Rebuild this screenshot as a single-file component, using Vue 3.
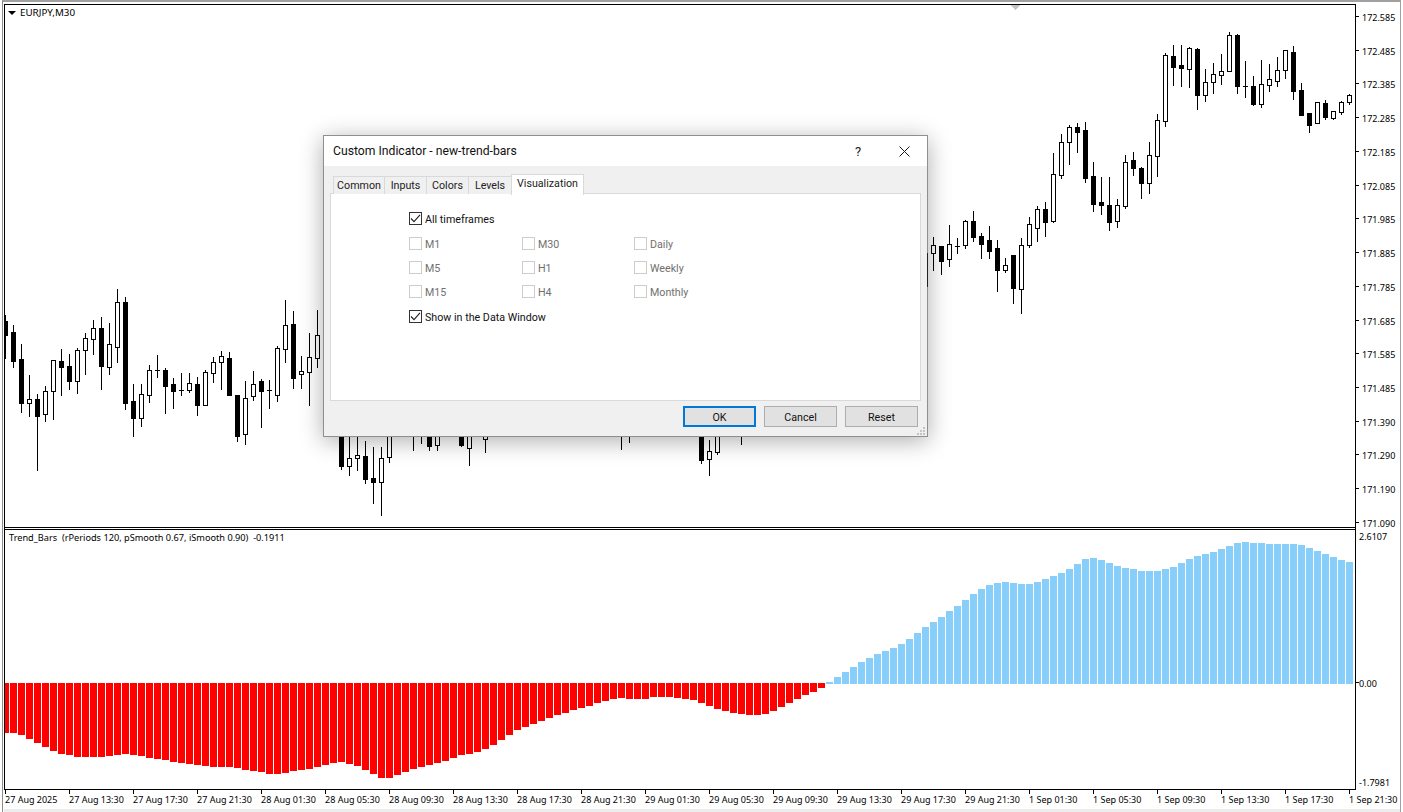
<template>
  <div class="terminal">
    <div class="frame">
      <section class="pane price-pane">
        <div class="plot-box">
          <svg class="plot" width="1350" height="522" viewBox="5 5 1350 522" shape-rendering="crispEdges">
            <polygon points="1010,5 1021,5 1015.5,10" fill="#c4c4c4" />
            <g v-for="c in candles" :key="c[0]">
              <rect :x="c[0]" :y="c[1]" width="1" :height="c[4] - c[1] + 1" fill="#000" />
              <rect :x="c[0] - 2" :y="c[2]" width="5" :height="c[3] - c[2] + 1" fill="#000" />
              <rect
                v-if="!c[5] && c[3] - c[2] > 1"
                :x="c[0] - 1"
                :y="c[2] + 1"
                width="3"
                :height="c[3] - c[2] - 1"
                fill="#fff"
              />
            </g>
          </svg>
          <div class="legend">
            <span class="legend-arrow"></span>
            <span>EURJPY,M30</span>
          </div>
        </div>
        <div class="axis">
          <svg width="44" height="523" viewBox="1356 5 44 523">
            <g v-for="p in prices" :key="p.label">
              <rect x="1356" :y="p.y" width="3" height="1" fill="#000" shape-rendering="crispEdges" />
              <text x="1362" :y="p.y + 4">{{ p.label }}</text>
            </g>
          </svg>
        </div>
      </section>

      <section class="pane indicator-pane">
        <div class="plot-box">
          <svg class="plot" width="1350" height="259" viewBox="5 530 1350 259" shape-rendering="crispEdges">
            <rect
              v-for="(y, i) in redBars"
              :key="'r' + i"
              :x="2 + i * 8"
              y="683"
              width="7"
              :height="y - 683"
              fill="#ff0000"
            />
            <rect
              v-for="(y, i) in blueBars"
              :key="'b' + i"
              :x="826 + i * 8"
              :y="y"
              width="7"
              :height="684 - y"
              fill="#87cefa"
            />
          </svg>
          <div class="indicator-label">Trend_Bars&nbsp; (rPeriods 120, pSmooth 0.67, iSmooth 0.90)&nbsp; -0.1911</div>
        </div>
        <div class="axis">
          <svg width="44" height="260" viewBox="1356 530 44 260">
            <text x="1359" y="540">2.6107</text>
            <rect x="1356" y="683" width="3" height="1" fill="#000" shape-rendering="crispEdges" />
            <text x="1359" y="687">0.00</text>
            <text x="1359" y="786">-1.7981</text>
          </svg>
        </div>
      </section>

      <div class="time-axis">
        <div v-for="t in times" :key="t" class="time-tick">{{ t }}</div>
      </div>
    </div>

    <div class="dialog">
      <div class="title-bar">
        <span class="title-text">Custom Indicator - new-trend-bars</span>
        <span class="title-btn help">?</span>
        <span class="title-btn">
          <svg width="11" height="11" viewBox="0 0 11 11">
            <path d="M.5.5l10 10M10.5.5l-10 10" stroke="#1a1a1a" stroke-width="1" fill="none" />
          </svg>
        </span>
      </div>

      <div class="dialog-body">
        <div class="tabs">
          <div v-for="tab in tabs" :key="tab" class="tab" :class="{ active: tab === 'Visualization' }">{{ tab }}</div>
        </div>
        <div class="tab-page">
          <label class="check-row first">
            <span class="box checked">
              <svg width="11" height="11" viewBox="0 0 11 11">
                <path d="M1 5.5l3 3.2L10 1.8" stroke="#222" stroke-width="1.1" fill="none" />
              </svg>
            </span>
            All timeframes
          </label>
          <div class="period-grid">
            <label v-for="p in periods" :key="p" class="check-row disabled">
              <span class="box"></span>
              {{ p }}
            </label>
          </div>
          <label class="check-row">
            <span class="box checked">
              <svg width="11" height="11" viewBox="0 0 11 11">
                <path d="M1 5.5l3 3.2L10 1.8" stroke="#222" stroke-width="1.1" fill="none" />
              </svg>
            </span>
            Show in the Data Window
          </label>
        </div>
        <div class="buttons">
          <button class="btn default">OK</button>
          <button class="btn">Cancel</button>
          <button class="btn">Reset</button>
        </div>
      </div>

      <svg class="grip" width="9" height="9" viewBox="0 0 9 9" shape-rendering="crispEdges">
        <path d="M6 0h2v2H6zM3 3h2v2H3zM6 3h2v2H6zM0 6h2v2H0zM3 6h2v2H3zM6 6h2v2H6z" fill="#c4c4c4" />
      </svg>
    </div>
  </div>
</template>

<script setup>
const tabs = ['Common', 'Inputs', 'Colors', 'Levels', 'Visualization']

// filled column by column
const periods = ['M1', 'M5', 'M15', 'M30', 'H1', 'H4', 'Daily', 'Weekly', 'Monthly']

const priceLabels = [
  '172.585', '172.485', '172.385', '172.285', '172.185', '172.085', '171.985', '171.885',
  '171.785', '171.685', '171.585', '171.485', '171.390', '171.290', '171.190', '171.090',
]
const prices = priceLabels.map((label, i) => ({ label, y: Math.round(17 + i * 33.73) }))

const hours = ['01:30', '05:30', '09:30', '13:30', '17:30', '21:30']
const times = [
  '27 Aug 2025',
  '27 Aug 13:30',
  '27 Aug 17:30',
  '27 Aug 21:30',
  ...hours.map((h) => `28 Aug ${h}`),
  ...hours.map((h) => `29 Aug ${h}`),
  ...hours.map((h) => `1 Sep ${h}`),
]

// x, high, body top, body bottom, low, black body
const candles = [
  [5, 315, 321, 335, 358, 1], [13, 325, 332, 361, 367, 1], [21, 344, 359, 403, 412, 1],
  [29, 375, 399, 403, 416, 0], [37, 394, 399, 416, 470, 1], [45, 386, 391, 414, 421, 0],
  [53, 360, 360, 391, 419, 0], [61, 349, 361, 367, 395, 1], [69, 354, 366, 381, 389, 1],
  [77, 348, 350, 381, 393, 0], [85, 333, 338, 350, 374, 0], [93, 320, 328, 339, 354, 0],
  [101, 317, 328, 366, 389, 1], [109, 323, 344, 367, 374, 0], [117, 289, 302, 347, 362, 0],
  [125, 297, 302, 403, 409, 1], [133, 384, 401, 418, 436, 1], [141, 384, 394, 418, 426, 0],
  [149, 365, 370, 395, 402, 0], [157, 355, 370, 370, 377, 1], [165, 368, 370, 386, 413, 1],
  [173, 378, 384, 391, 408, 1], [181, 373, 390, 390, 395, 1], [189, 373, 383, 390, 392, 0],
  [197, 377, 384, 405, 415, 1], [205, 370, 372, 405, 405, 0], [213, 357, 362, 373, 382, 0],
  [221, 351, 356, 362, 389, 0], [229, 352, 358, 395, 395, 1], [237, 395, 395, 436, 441, 1],
  [245, 381, 398, 434, 444, 0], [253, 371, 384, 396, 400, 0], [261, 379, 381, 391, 427, 1],
  [269, 380, 390, 390, 408, 1], [277, 346, 348, 395, 401, 0], [285, 300, 325, 349, 362, 0],
  [293, 311, 324, 378, 388, 1], [301, 356, 371, 374, 388, 0], [309, 333, 357, 372, 405, 0],
  [317, 310, 335, 358, 367, 0],
  // below the dialog
  [341, 420, 425, 466, 469, 1], [349, 420, 458, 466, 475, 0], [357, 420, 455, 458, 470, 0],
  [365, 441, 456, 479, 483, 1], [373, 447, 478, 482, 503, 1], [381, 447, 458, 482, 515, 0],
  [389, 420, 425, 457, 462, 0], [413, 420, 422, 424, 450, 0], [421, 420, 422, 424, 443, 0],
  [429, 420, 425, 446, 450, 1], [437, 420, 425, 445, 450, 0], [461, 420, 425, 445, 446, 1],
  [469, 420, 425, 448, 465, 0], [485, 420, 425, 439, 452, 0], [621, 420, 422, 424, 449, 0],
  [629, 420, 422, 424, 442, 0], [701, 420, 425, 460, 463, 1], [709, 440, 451, 459, 475, 0],
  [717, 420, 425, 452, 454, 0], [741, 420, 422, 424, 444, 0],
  // right of the dialog
  [933, 237, 245, 253, 270, 0], [941, 246, 246, 261, 274, 1], [949, 225, 244, 259, 266, 0],
  [957, 238, 246, 246, 253, 1], [965, 220, 221, 245, 248, 0], [973, 211, 221, 237, 241, 1],
  [981, 233, 236, 244, 258, 1], [989, 226, 240, 251, 258, 1], [997, 240, 248, 270, 291, 1],
  [1005, 258, 265, 270, 272, 0], [1013, 255, 255, 288, 303, 1], [1021, 238, 245, 289, 313, 0],
  [1029, 217, 224, 245, 247, 0], [1037, 206, 209, 228, 241, 0], [1045, 202, 209, 222, 236, 1],
  [1053, 153, 174, 221, 222, 0], [1061, 134, 142, 175, 178, 0], [1069, 125, 127, 142, 164, 0],
  [1077, 123, 127, 132, 152, 1], [1085, 122, 130, 178, 182, 1], [1093, 162, 176, 204, 211, 1],
  [1101, 177, 202, 205, 214, 1], [1109, 177, 205, 222, 230, 1], [1117, 199, 205, 221, 227, 0],
  [1125, 155, 162, 206, 208, 0], [1133, 152, 160, 168, 175, 1], [1141, 167, 168, 183, 198, 1],
  [1149, 142, 155, 183, 193, 0], [1157, 114, 120, 156, 176, 0], [1165, 53, 55, 121, 126, 0],
  [1173, 45, 56, 67, 85, 1], [1181, 45, 65, 68, 86, 1], [1189, 47, 48, 69, 87, 0],
  [1197, 48, 49, 95, 109, 1], [1205, 69, 82, 95, 101, 0], [1213, 63, 74, 82, 93, 0],
  [1221, 54, 71, 75, 84, 0], [1229, 32, 35, 71, 71, 0], [1237, 34, 35, 86, 93, 1],
  [1245, 61, 86, 86, 97, 1], [1253, 76, 86, 104, 105, 1], [1261, 60, 84, 104, 107, 0],
  [1269, 64, 79, 85, 91, 0], [1277, 57, 70, 81, 86, 0], [1285, 50, 50, 70, 78, 0],
  [1293, 46, 52, 91, 99, 1], [1301, 83, 90, 115, 115, 1], [1309, 113, 113, 125, 132, 1],
  [1317, 102, 102, 123, 123, 0], [1325, 100, 103, 117, 119, 1], [1333, 111, 111, 118, 119, 0],
  [1341, 101, 102, 112, 114, 0], [1349, 94, 95, 102, 104, 0],
]

// bottom edge of each red bar, from x = 5 every 8px
const redBars = [
  733, 733, 735, 739, 743, 747, 751, 754, 755, 757, 757, 757, 757, 756, 755, 754, 755, 756, 758,
  759, 760, 762, 763, 764, 765, 766, 767, 767, 767, 768, 770, 771, 772, 774, 774, 773, 771, 770,
  769, 767, 765, 763, 762, 764, 766, 770, 774, 778, 778, 775, 772, 769, 767, 765, 763, 761, 758,
  755, 754, 752, 749, 745, 740, 735, 730, 727, 724, 721, 718, 715, 713, 710, 708, 706, 703, 701,
  699, 698, 699, 699, 699, 697, 697, 697, 698, 699, 700, 703, 706, 709, 711, 713, 714, 715, 715,
  714, 711, 707, 703, 699, 695, 692, 688,
]

// top edge of each blue bar, from x = 829 every 8px
const blueBars = [
  682, 677, 672, 667, 662, 658, 654, 651, 648, 644, 639, 633, 627, 622, 617, 611, 606, 600, 594,
  589, 585, 583, 582, 583, 584, 584, 582, 579, 576, 573, 569, 564, 559, 558, 560, 563, 566, 568,
  569, 571, 571, 571, 569, 567, 563, 559, 556, 554, 552, 549, 546, 543, 542, 543, 543, 544, 544,
  544, 544, 545, 548, 551, 554, 557, 560, 562,
]
</script>

<style>
html,
body {
  margin: 0;
  overflow: hidden;
  background: #fff;
}
</style>

<style scoped>
.terminal {
  position: relative;
  display: flex;
  width: 1403px;
  height: 812px;
  padding: 0 2px 0 2px;
  box-sizing: border-box;
  overflow: hidden;
  background: #fff;
  font-family: "Noto Sans", sans-serif;
  color: #000;
}

.frame {
  flex: 1;
  min-width: 0;
  display: flex;
  flex-direction: column;
  padding: 2px 0 0 1px;
  border-top: 2px solid #a0a0a0;
  border-left: 1px solid #8c8c8c;
  border-right: 1px solid #a0a0a0;
  overflow: hidden;
}

.pane {
  display: flex;
  flex: none;
  border-left: 1px solid #000;
}

.plot-box {
  position: relative;
  width: 1350px;
  border-top: 1px solid #000;
  border-bottom: 1px solid #000;
}

.price-pane .plot-box {
  margin-bottom: 1px;
}

.plot {
  display: block;
}

.axis {
  border-left: 1px solid #000;
  width: 44px;
}

.axis svg {
  display: block;
  overflow: visible;
}

.axis text {
  font-size: 9px;
  fill: #000;
  transform: translateY(1px);
}

.legend {
  position: absolute;
  left: 3px;
  top: 1px;
  display: flex;
  align-items: center;
  gap: 4px;
  font-size: 9.8px;
  line-height: 13px;
}

.legend-arrow {
  width: 0;
  height: 0;
  border-left: 4px solid transparent;
  border-right: 4px solid transparent;
  border-top: 4px solid #000;
}

.indicator-label {
  position: absolute;
  left: 4px;
  top: 1px;
  font-size: 9.2px;
  line-height: 14px;
  white-space: nowrap;
}

.time-axis {
  display: flex;
  flex: 1;
  padding-left: 1px;
  overflow: hidden;
  background: #fff;
  box-shadow: inset 0 -3px 0 #ececec;
}

.time-tick {
  flex: 0 0 64px;
  position: relative;
  padding-top: 3px;
  font-size: 9px;
  line-height: 13px;
  white-space: nowrap;
}

.time-tick::before {
  content: "";
  position: absolute;
  left: 0;
  top: 0;
  width: 1px;
  height: 4px;
  background: #000;
}

.dialog {
  position: absolute;
  left: 323px;
  top: 135px;
  width: 605px;
  height: 302px;
  box-sizing: border-box;
  display: flex;
  flex-direction: column;
  background: #f0f0f0;
  border: 1px solid #8f8f8f;
  box-shadow: 0 4px 22px rgba(0, 0, 0, 0.32);
  font-family: Roboto, sans-serif;
  font-size: 10.7px;
}

/* wick of the candle behind the dialog, seen through its edge */
.dialog::after {
  content: "";
  position: absolute;
  right: -1px;
  top: 117px;
  width: 1px;
  height: 34px;
  background: #222;
}

.title-bar {
  display: flex;
  align-items: center;
  flex: none;
  height: 30px;
  background: #fff;
}

.title-text {
  flex: 1;
  padding-left: 9px;
  font-size: 12.2px;
  color: #111;
}

.title-btn {
  display: flex;
  align-items: center;
  justify-content: center;
  width: 46px;
  height: 30px;
}

.help {
  font-size: 13px;
  color: #222;
}

.dialog-body {
  flex: 1;
  display: flex;
  flex-direction: column;
  padding: 7px 6px 0;
}

.tabs {
  display: flex;
  align-items: flex-end;
  height: 21px;
  padding-left: 3px;
  margin-bottom: -1px;
  position: relative;
  z-index: 1;
}

.tab {
  height: 18px;
  box-sizing: border-box;
  display: flex;
  align-items: center;
  justify-content: center;
  background: #f0f0f0;
  border: 1px solid #d9d9d9;
  border-bottom: none;
  margin-right: -1px;
  color: #222;
  width: 43px;
}

.tab:first-child {
  width: 52px;
}

.tab:nth-child(4) {
  width: 44px;
}

.tab.active {
  height: 21px;
  width: 73px;
  padding-bottom: 3px;
  background: #fff;
  margin-bottom: -1px;
}

.tab-page {
  height: 208px;
  box-sizing: border-box;
  padding: 18px 0 0 78px;
  background: #fff;
  border: 1px solid #d9d9d9;
}

.check-row {
  display: flex;
  align-items: flex-start;
  gap: 3px;
  height: 13px;
  line-height: 15px;
  color: #111;
  white-space: nowrap;
}

.check-row.disabled {
  color: #707070;
}

.box {
  flex: none;
  width: 13px;
  height: 13px;
  box-sizing: border-box;
  display: flex;
  align-items: center;
  justify-content: center;
  background: #fff;
  border: 1px solid #cdcdcd;
}

.box.checked {
  border-color: #333;
}

.period-grid {
  display: grid;
  grid-template-rows: repeat(3, 13px);
  grid-template-columns: 113px 112px 80px;
  grid-auto-flow: column;
  row-gap: 11px;
  margin: 12px 0 12px;
}

.buttons {
  flex: 1;
  display: flex;
  justify-content: flex-end;
  gap: 8px;
  padding: 5px 3px 0 0;
}

.btn {
  width: 73px;
  height: 21px;
  padding: 1px 0 0;
  box-sizing: border-box;
  background: #e1e1e1;
  border: 1px solid #adadad;
  font: inherit;
  color: #111;
}

.btn.default {
  border: 2px solid #0078d7;
}

.grip {
  position: absolute;
  right: 1px;
  bottom: 0;
}
</style>
